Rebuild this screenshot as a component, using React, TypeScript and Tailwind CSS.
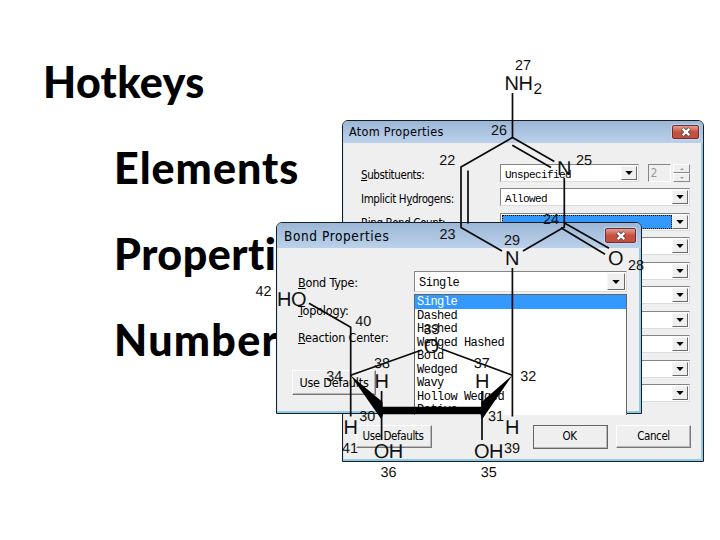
import type { ReactNode } from "react";
import clsx from "clsx";

type Atom = { text: string; x: number; y: number; size?: number };

const bondTypes = [
  "Single",
  "Dashed",
  "Hashed",
  "Wedged Hashed",
  "Bold",
  "Wedged",
  "Wavy",
  "Hollow Wedged",
  "Dative",
];

const atoms: Atom[] = [
  { text: "NH", x: 504.5, y: 90 },
  { text: "2", x: 533.5, y: 93.5, size: 15.5 },
  { text: "N", x: 557, y: 175 },
  { text: "N", x: 505, y: 265 },
  { text: "O", x: 608, y: 265.3 },
  { text: "HO", x: 277, y: 306 },
  { text: "O", x: 423.7, y: 353.3 },
  { text: "H", x: 374.4, y: 388 },
  { text: "H", x: 475, y: 388 },
  { text: "H", x: 343.4, y: 434.3 },
  { text: "H", x: 505, y: 434.3 },
  { text: "OH", x: 373.8, y: 457.5 },
  { text: "OH", x: 474, y: 457.5 },
];

const atomNumbers: Atom[] = [
  { text: "27", x: 515, y: 70 },
  { text: "26", x: 491, y: 135 },
  { text: "22", x: 439.3, y: 165 },
  { text: "25", x: 576, y: 165.3 },
  { text: "24", x: 543, y: 224 },
  { text: "23", x: 439.5, y: 239 },
  { text: "29", x: 504, y: 245 },
  { text: "28", x: 628, y: 270 },
  { text: "42", x: 255.5, y: 296 },
  { text: "40", x: 355.3, y: 325.5 },
  { text: "33", x: 423.5, y: 333.5 },
  { text: "38", x: 374, y: 368 },
  { text: "37", x: 473.7, y: 368 },
  { text: "34", x: 326.3, y: 380.7 },
  { text: "32", x: 520.3, y: 380.5 },
  { text: "30", x: 359.3, y: 420.5 },
  { text: "31", x: 488, y: 420.5 },
  { text: "41", x: 342, y: 453 },
  { text: "39", x: 504, y: 453 },
  { text: "36", x: 380.5, y: 476.5 },
  { text: "35", x: 480.7, y: 476.5 },
];

function DropButton({ className }: { className: string }) {
  return (
    <span
      className={clsx(
        "flex shrink-0 items-center justify-center border border-t-[#f8f8f8] border-r-[#6a6a6a] border-b-[#6a6a6a] border-l-[#f8f8f8] bg-[#efefef]",
        className,
      )}
    >
      <svg width="8" height="4" viewBox="0 0 8 4" aria-hidden="true">
        <path d="M0.3 0h7.4L4 4z" fill="#000" />
      </svg>
    </span>
  );
}

function CloseButton({ className }: { className: string }) {
  return (
    <span
      className={clsx(
        "flex items-center justify-center rounded-[2px] border border-[#6b2f35] bg-linear-to-b from-[#dfa095] via-[#c8503f] via-50% to-[#c2503f] ring-1 ring-[#d3dff0]/60",
        className,
      )}
    >
      <svg width="12" height="10" viewBox="0 0 12 10" aria-hidden="true">
        <path d="M2.5 1.7L9.5 8.3M9.5 1.7L2.5 8.3" stroke="#5d3941" strokeWidth="4" />
        <path d="M2.7 1.9L9.3 8.1M9.3 1.9L2.7 8.1" stroke="#fff" strokeWidth="2.5" />
      </svg>
    </span>
  );
}

function Combo({ value, className, buttonClassName }: { value?: string; className?: string; buttonClassName: string }) {
  return (
    <div
      className={clsx(
        "flex items-stretch border border-t-[#858585] border-r-[#dcdcdc] border-b-[#dcdcdc] border-l-[#858585] bg-white p-px font-['Liberation_Mono',monospace] text-black",
        className,
      )}
    >
      <span className="flex-1 pt-px pl-[3px] whitespace-pre">{value}</span>
      <DropButton className={buttonClassName} />
    </div>
  );
}

function PushButton({ children, className }: { children: ReactNode; className: string }) {
  return (
    <div
      className={clsx(
        "flex items-center justify-center border border-t-white border-r-[#777] border-b-[#777] border-l-white bg-[#efefef] whitespace-nowrap shadow-[inset_-1px_-1px_#b8b8b8]",
        className,
      )}
    >
      {children}
    </div>
  );
}

function AtomDialog() {
  return (
    <section className="absolute top-[120px] left-[342px] flex h-[342px] w-[362px] flex-col overflow-hidden rounded-t-md border border-[#17202a] bg-[#efefef] font-['DejaVu_Sans_Condensed','DejaVu_Sans',sans-serif] text-[11px] text-black shadow-[inset_-2px_-2px_#8fcbe3,inset_1px_0_#d5e3f3]">
      <header className="flex h-[22px] items-center justify-between bg-linear-to-b from-[#9cb7d6] to-[#bbd1eb] pr-1 pl-1.5">
        <span className="pt-px text-[12.5px] tracking-[0.3px]">Atom Properties</span>
        <CloseButton className="h-[14px] w-[27px]" />
      </header>
      <div className="flex flex-1">
        <div className="flex w-[157px] flex-col pt-[25px] pl-[18px] text-[11.5px] leading-[14px] tracking-[-0.4px] whitespace-nowrap">
          <span><u>S</u>ubstituents:</span>
          <span className="mt-[10px]">Implicit H<u>y</u>drogens:</span>
          <span className="mt-[10px]">Ring Bond Count:</span>
        </div>
        <div className="flex w-[190px] flex-col gap-[6.44px] pt-[21px] text-[11px] leading-[16px] tracking-[-0.6px]">
          <div className="flex h-[18px] justify-between">
            <Combo value="Unspecified" className="w-[139px]" buttonClassName="w-[16px]" />
            <span className="ml-1.5 w-[23px] border border-t-[#858585] border-r-white border-b-white border-l-[#858585] pl-0.5 text-[12px] text-[#999]">2</span>
            <span className="flex w-[17px] flex-col">
              {["M0 2h4L2 0z", "M0 0h4L2 2z"].map((d) => (
                <span key={d} className="flex flex-1 items-center justify-center border border-t-white border-r-[#888] border-b-[#888] border-l-white">
                  <svg width="4" height="2" aria-hidden="true"><path d={d} fill="#999" /></svg>
                </span>
              ))}
            </span>
          </div>
          <Combo value="Allowed" className="h-[18px]" buttonClassName="w-[16px]" />
          <div className="flex h-[18px] border border-t-[#858585] border-r-[#dcdcdc] border-b-[#dcdcdc] border-l-[#858585] bg-white p-px">
            <span className="flex-1 border border-dotted border-black bg-[#3399ff] pl-0.5 leading-[11px] text-white">-</span>
            <DropButton className="w-[16px]" />
          </div>
          {[4, 5, 6, 7, 8, 9, 10].map((row) => (
            <Combo key={row} className="h-[18px] shrink-0" buttonClassName="w-[16px]" />
          ))}
        </div>
      </div>
      <footer className="flex h-[36px] pl-[13px] text-[11.5px] tracking-[-0.4px]">
        <PushButton className="h-[23px] w-[76px] pr-[2px]">Use Defaults</PushButton>
        <PushButton className="ml-[101px] h-[24px] w-[75px] pr-[2px] outline outline-[#666] -outline-offset-1">OK</PushButton>
        <PushButton className="ml-[8px] h-[23px] w-[75px]">Cancel</PushButton>
      </footer>
    </section>
  );
}

function BondDialog() {
  return (
    <section className="absolute top-[222px] left-[276px] flex h-[192px] w-[366px] flex-col rounded-t-md border border-[#17202a] bg-[#efefef] font-['DejaVu_Sans_Condensed','DejaVu_Sans',sans-serif] text-black shadow-[inset_-2px_-2px_#8fcbe3,inset_1px_0_#d5e3f3]">
      <header className="flex h-[25px] shrink-0 items-center justify-between rounded-t-[5px] bg-linear-to-b from-[#9cb7d6] to-[#bbd1eb] pr-[5px] pl-[7px]">
        <span className="pt-px text-[13.5px] tracking-[0.6px]">Bond Properties</span>
        <CloseButton className="h-[15px] w-[31px]" />
      </header>
      <div className="flex">
        <div className="flex w-[137px] flex-col pt-[27px] pl-[21px] text-[12.5px] leading-[16px] tracking-[-0.2px] whitespace-nowrap">
          <span><u>B</u>ond Type:</span>
          <span className="mt-[12px]"><u>T</u>opology:</span>
          <span className="mt-[11px]"><u>R</u>eaction Center:</span>
          <PushButton className="mt-[24px] -ml-[6px] h-[25px] w-[84px]">Use Defaults</PushButton>
        </div>
        <div className="flex w-[213px] flex-col pt-[23px] text-[12px] tracking-[-0.5px]">
          <Combo value="Single" className="h-[21px] leading-[18px]" buttonClassName="w-[18px]" />
          <div className="mt-[2px] h-[121px] border border-b-0 border-[#666] bg-white">
            <ul className="h-[112px] overflow-hidden font-['Liberation_Mono',monospace] leading-[15px]">
              {bondTypes.map((type, i) => (
                <li key={type} className={clsx("h-[13.5px] pl-0.5 whitespace-pre", i === 0 && "bg-[#3399ff] text-white")}>
                  {type}
                </li>
              ))}
            </ul>
          </div>
        </div>
      </div>
    </section>
  );
}

function Molecule() {
  return (
    <svg className="absolute inset-0" width="720" height="540" viewBox="0 0 720 540" aria-label="Numbered structure">
      <g fill="none" stroke="#0a0a0a" strokeWidth="1.7">
        <path d="M512.5 93V137.5L461 167V227.5L502 251" />
        <path d="M512.5 137.5L554.3 161.5M512.3 145.3L551 167.5" />
        <path d="M468 170.5V223.5" />
        <path d="M564.3 178V227L523 251" />
        <path d="M564.5 223L609 248.3M561 227.7L605 254.3" />
        <path d="M512.4 268V416.5" />
        <path d="M309 303.3L350.7 327.3V416.5" />
        <path d="M350.7 375.3L421.7 350M441.7 349L512.4 375.3" />
        <path d="M381.6 391V440M482 391V440" />
      </g>
      <path d="M350.3 375L382.5 402V406.7H481.5V402L512.7 374.8L482 419.5L480.5 414.2H383L381.5 419.5Z" fill="#000" />
      <g fontFamily="'Liberation Sans', Arial, sans-serif" fill="#111" textRendering="geometricPrecision">
        {atoms.map((a) => (
          <text key={`${a.x}-${a.y}`} x={a.x} y={a.y} fontSize={a.size ?? 20} letterSpacing="-0.5">{a.text}</text>
        ))}
        {atomNumbers.map((a) => (
          <text key={a.text} x={a.x} y={a.y} fontSize="14.4">{a.text}</text>
        ))}
      </g>
    </svg>
  );
}

export default function App() {
  return (
    <main className="relative h-[540px] w-[720px] overflow-hidden bg-white">
      <div className="flex flex-col pt-[39px] pl-[43px] font-['Lato',sans-serif] text-[43px] leading-[86px] font-black text-black [font-variant-ligatures:none]">
        <h1 className="tracking-[0.3px]">Hotkeys</h1>
        <ul className="pl-[71px]">
          <li className="tracking-[1px]">Elements</li>
          <li className="tracking-[0.5px]">Properties</li>
          <li className="tracking-[1.3px]">Numbers</li>
        </ul>
      </div>
      <AtomDialog />
      <BondDialog />
      <Molecule />
    </main>
  );
}
